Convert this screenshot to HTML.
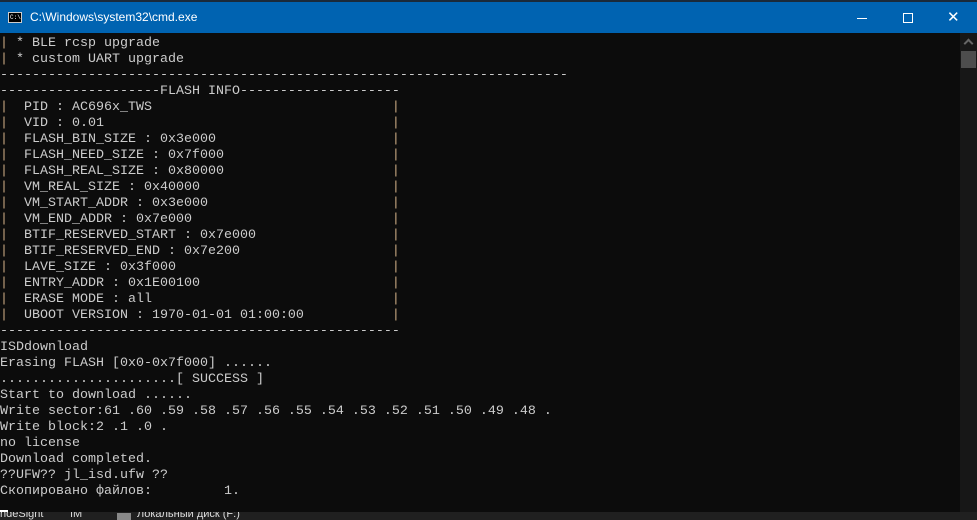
<!DOCTYPE html>
<html><head><meta charset="utf-8"><style>
html,body{margin:0;padding:0;width:977px;height:520px;overflow:hidden;background:#0c0c0c;}
#top{position:absolute;left:0;top:0;width:977px;height:2px;background:#1a2a3a;}
#title{position:absolute;left:0;top:2px;width:977px;height:31px;background:#0063b1;color:#fff;font:12px "Liberation Sans",sans-serif;}
#title .t{position:absolute;left:30px;top:8px;}
#icon{position:absolute;left:8px;top:10px;width:14px;height:11px;background:#000;border:1px solid #ccc;box-sizing:border-box;}
#icon span{position:absolute;left:1px;top:1px;color:#fff;font:6px "Liberation Mono",monospace;}
.min{position:absolute;left:857px;top:16px;width:10px;height:1px;background:#fff;}
.max{position:absolute;left:903px;top:11px;width:10px;height:10px;border:1px solid #fff;box-sizing:border-box;}
.cls{position:absolute;left:947px;top:6px;color:#fff;font:15px "Liberation Sans",sans-serif;}
#sb{position:absolute;left:960px;top:33px;width:17px;height:479px;background:#171717;}
#sb .th{position:absolute;left:1px;top:18px;width:15px;height:17px;background:#4d4d4d;}
#sb .ar{position:absolute;left:5px;top:7px;width:5px;height:5px;border-left:2px solid #666;border-top:2px solid #666;transform:rotate(45deg);}
pre{position:absolute;left:0;top:36px;margin:0;font:13.33px/16px "Liberation Mono","DejaVu Sans Mono",monospace;color:#cccccc;}
.p{color:#c8a882;}
#cur{position:absolute;left:0;top:510px;width:8px;height:3px;background:#fff;}
#tb{position:absolute;left:0;top:512px;width:977px;height:8px;background:#202020;color:#ddd;font:11px "Liberation Sans",sans-serif;overflow:hidden;}
#tb span{position:absolute;top:-4px;}
</style></head><body>
<div id="top"></div>
<div id="title"><div id="icon"><span>C:\</span></div><span class="t">C:\Windows\system32\cmd.exe</span><div class="min"></div><div class="max"></div><div class="cls">✕</div></div>
<pre><span class="p">|</span> * BLE rcsp upgrade
<span class="p">|</span> * custom UART upgrade
-----------------------------------------------------------------------
--------------------FLASH INFO--------------------
<span class="p">|</span>  PID : AC696x_TWS                              <span class="p">|</span>
<span class="p">|</span>  VID : 0.01                                    <span class="p">|</span>
<span class="p">|</span>  FLASH_BIN_SIZE : 0x3e000                      <span class="p">|</span>
<span class="p">|</span>  FLASH_NEED_SIZE : 0x7f000                     <span class="p">|</span>
<span class="p">|</span>  FLASH_REAL_SIZE : 0x80000                     <span class="p">|</span>
<span class="p">|</span>  VM_REAL_SIZE : 0x40000                        <span class="p">|</span>
<span class="p">|</span>  VM_START_ADDR : 0x3e000                       <span class="p">|</span>
<span class="p">|</span>  VM_END_ADDR : 0x7e000                         <span class="p">|</span>
<span class="p">|</span>  BTIF_RESERVED_START : 0x7e000                 <span class="p">|</span>
<span class="p">|</span>  BTIF_RESERVED_END : 0x7e200                   <span class="p">|</span>
<span class="p">|</span>  LAVE_SIZE : 0x3f000                           <span class="p">|</span>
<span class="p">|</span>  ENTRY_ADDR : 0x1E00100                        <span class="p">|</span>
<span class="p">|</span>  ERASE MODE : all                              <span class="p">|</span>
<span class="p">|</span>  UBOOT VERSION : 1970-01-01 01:00:00           <span class="p">|</span>
--------------------------------------------------
ISDdownload
Erasing FLASH [0x0-0x7f000] ......
......................[ SUCCESS ]
Start to download ......
Write sector:61 .60 .59 .58 .57 .56 .55 .54 .53 .52 .51 .50 .49 .48 .
Write block:2 .1 .0 .
no license
Download completed.
??UFW?? jl_isd.ufw ??
Скопировано файлов:         1.
</pre>
<div id="sb"><div class="ar"></div><div class="th"></div></div>
<div id="cur"></div>
<div id="tb"><span style="left:0">ndeSight</span><span style="left:70px">IM</span><span style="left:117px;width:14px;height:8px;top:1px;background:#888"></span><span style="left:137px">Локальный диск (F:)</span></div>
</body></html>
